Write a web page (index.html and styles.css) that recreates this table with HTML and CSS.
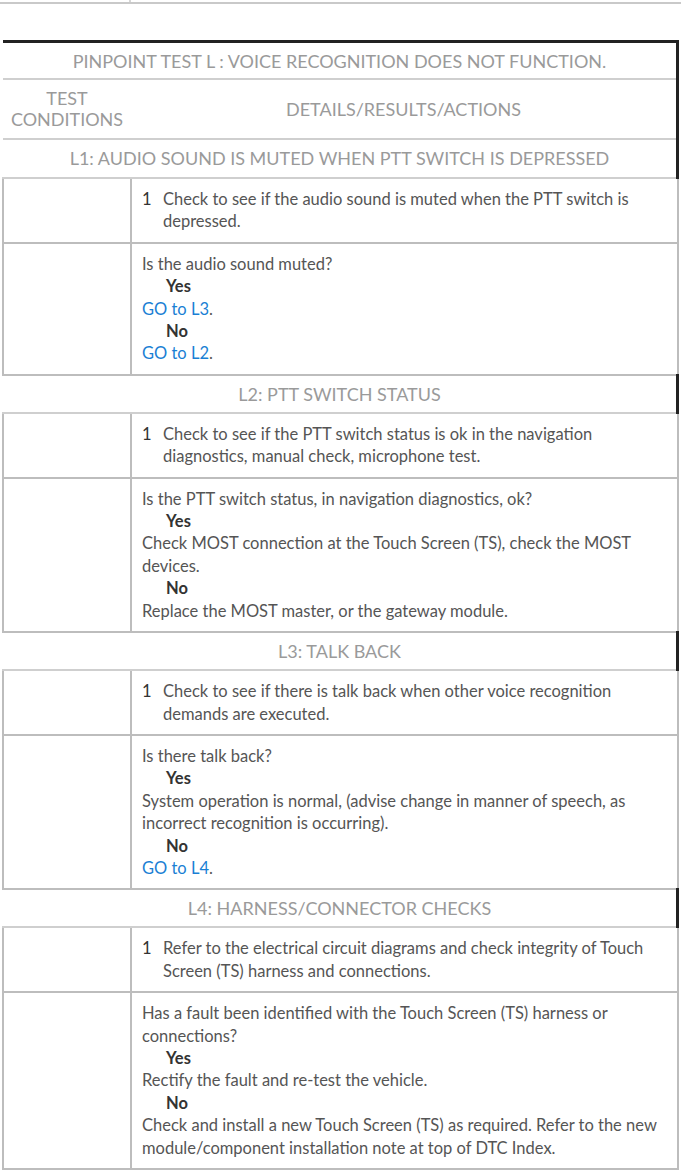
FILE: index.html
```html
<!DOCTYPE html>
<html>
<head>
<meta charset="utf-8">
<link rel="stylesheet" href="styles.css">
</head>
<body>
<div class="prev"><div class="prev-c1"></div></div>
<table class="pt">
  <colgroup><col class="col1"><col class="col2"></colgroup>
  <tr><td colspan="2" class="title top">PINPOINT TEST L : VOICE RECOGNITION DOES NOT FUNCTION.</td></tr>
  <tr><th class="hc1">TEST<br>CONDITIONS</th><th class="hc2">DETAILS/RESULTS/ACTIONS</th></tr>
  <tr><td colspan="2" class="title l1">L1: AUDIO SOUND IS MUTED WHEN PTT SWITCH IS DEPRESSED</td></tr>
  <tr><td class="c1"></td><td class="c2"><div class="step"><span class="num">1</span><span>Check to see if the audio sound is muted when the PTT switch is depressed.</span></div></td></tr>
  <tr><td class="c1"></td><td class="c2">Is the audio sound muted?<div class="ans">Yes</div><a class="lnk">GO to L3</a>.<div class="ans">No</div><a class="lnk">GO to L2</a>.</td></tr>
  <tr><td colspan="2" class="title">L2: PTT SWITCH STATUS</td></tr>
  <tr><td class="c1"></td><td class="c2"><div class="step"><span class="num">1</span><span>Check to see if the PTT switch status is ok in the navigation diagnostics, manual check, microphone test.</span></div></td></tr>
  <tr><td class="c1"></td><td class="c2">Is the PTT switch status, in navigation diagnostics, ok?<div class="ans">Yes</div>Check MOST connection at the Touch Screen (TS), check the MOST devices.<div class="ans">No</div>Replace the MOST master, or the gateway module.</td></tr>
  <tr><td colspan="2" class="title">L3: TALK BACK</td></tr>
  <tr><td class="c1"></td><td class="c2"><div class="step"><span class="num">1</span><span>Check to see if there is talk back when other voice recognition demands are executed.</span></div></td></tr>
  <tr><td class="c1"></td><td class="c2">Is there talk back?<div class="ans">Yes</div>System operation is normal, (advise change in manner of speech, as incorrect recognition is occurring).<div class="ans">No</div><a class="lnk">GO to L4</a>.</td></tr>
  <tr><td colspan="2" class="title">L4: HARNESS/CONNECTOR CHECKS</td></tr>
  <tr><td class="c1"></td><td class="c2"><div class="step"><span class="num">1</span><span>Refer to the electrical circuit diagrams and check integrity of Touch Screen (TS) harness and connections.</span></div></td></tr>
  <tr><td class="c1"></td><td class="c2">Has a fault been identified with the Touch Screen (TS) harness or connections?<div class="ans">Yes</div>Rectify the fault and re-test the vehicle.<div class="ans">No</div>Check and install a new Touch Screen (TS) as required. Refer to the new module/component installation note at top of DTC Index.</td></tr>
</table>
</body>
</html>
```

FILE: styles.css
```css
html, body {
  margin: 0;
  padding: 0;
  background: #fff;
}
body {
  font-family: Lato, "Liberation Sans", sans-serif;
  color: #555;
}
.prev {
  display: flex;
  height: 2px;
  width: 681px;
  border-bottom: 2px solid #c9c9c9;
  margin-bottom: 36px;
}
.prev-c1 {
  width: 129px;
  border-right: 2px solid #d6d6d6;
}
.pt {
  margin-left: 2px;
  width: 677px;
  border-collapse: collapse;
  table-layout: fixed;
}
.col1 {
  width: 128px;
}
.pt td, .pt th {
  padding: 0;
  vertical-align: top;
}
.title {
  text-align: center;
  color: #9a9a9a;
  font-size: 18px;
  line-height: 22px;
  padding: 7px 0 !important;
  border-right: 3px solid #222;
  border-bottom: 2px solid #cfcfcf;
}
.title.l1 {
  padding: 7px 0 8px 0 !important;
}
.title.top {
  border-top: 3px solid #222;
  padding: 7px 0 6px 0 !important;
}
.hc1, .hc2 {
  font-weight: normal;
  color: #9a9a9a;
  font-size: 18px;
  line-height: 21px;
  text-align: center;
  vertical-align: middle !important;
  padding: 8px 0 !important;
  border-bottom: 2px solid #cfcfcf;
}
.hc2 {
  border-right: 3px solid #222;
}
.c1 {
  border: 2px solid #bdbdbd;
}
.c2 {
  border: 2px solid #bdbdbd;
  padding: 9px 10px 9px 10px !important;
  font-size: 16.5px;
  line-height: 22.4px;
  color: #555;
}
.step {
  display: flex;
}
.num {
  width: 21px;
  flex: none;
  color: #333;
}
.ans {
  font-weight: bold;
  color: #333;
  padding-left: 24px;
}
.lnk {
  color: #1a7fd4;
  text-decoration: none;
}
```
